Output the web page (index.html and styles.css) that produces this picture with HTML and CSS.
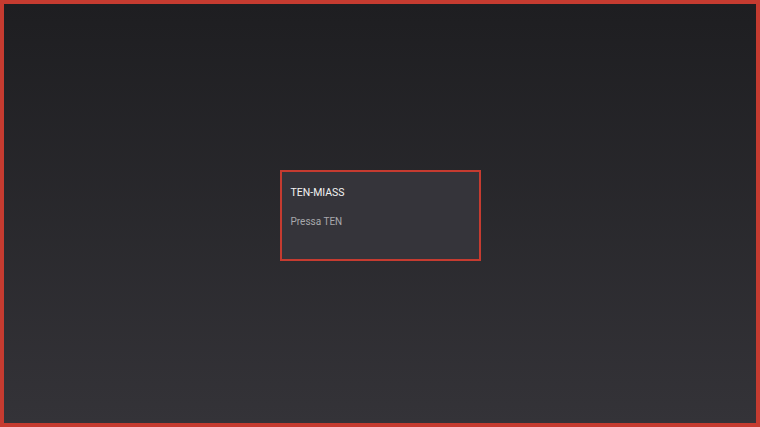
FILE: index.html
```html
<!DOCTYPE html>
<html lang="it">
  <head>
    <meta charset="utf-8">
    <title>TEN-MIASS</title>
    <link rel="stylesheet" href="styles.css">
  </head>
  <body>
    <div class="screen">
      <div class="card">
        <div class="card-title">TEN-MIASS</div>
        <div class="card-sub">Pressa TEN</div>
      </div>
    </div>
  </body>
</html>
```

FILE: styles.css
```css
html,
body {
  margin: 0;
  padding: 0;
  height: 100%;
}

body {
  font-family: Roboto, "Liberation Sans", sans-serif;
  font-size: 11px;
}

.screen {
  box-sizing: border-box;
  height: 427px;
  border: 4px solid #c53b30;
  background: linear-gradient(to bottom, #1e1e21 0%, #343338 100%);
  display: flex;
  align-items: center;
  justify-content: center;
  padding-top: 4px;
}

.card {
  box-sizing: border-box;
  width: 201px;
  height: 91px;
  border: 2px solid #c53b30;
  background-color: #35343a;
  padding: 14px 8px 0 9px;
}

.card-title {
  color: #f2f2f2;
  font-size: 10.5px;
  line-height: 13px;
}

.card-sub {
  color: #a8a8ac;
  font-size: 10px;
  margin-top: 16px;
  line-height: 13px;
}
```
